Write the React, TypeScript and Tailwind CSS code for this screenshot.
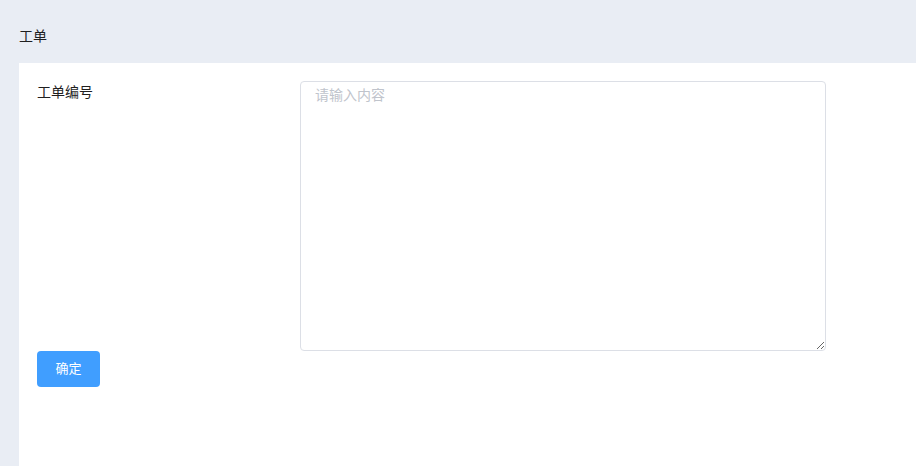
export default function App() {
  return (
    <div
      className="min-h-[466px] bg-[#e9edf4] text-[14px] text-[#1f1f1f]"
      style={{ fontFamily: '"Liberation Sans", "Noto Sans CJK SC", sans-serif' }}
    >
      <div className="h-[63px] pl-[19px] flex items-center">
        <span className="leading-[22px] pt-[8px]">工单</span>
      </div>
      <div className="ml-[19px] bg-white min-h-[403px] px-[18px] pt-[18px]">
        <div className="flex">
          <label className="w-[263px] shrink-0 leading-[22px] text-[#1f1f1f]">工单编号</label>
          <textarea
            placeholder="请输入内容"
            className="w-[526px] h-[270px] border border-[#dcdfe6] rounded-[4px] px-[14px] py-[3px] text-[14px] leading-[21px] placeholder:text-[#c0c4cc] outline-none"
          />
        </div>
        <button className="w-[63px] h-[36px] bg-[#409eff] text-white text-[13px] rounded-[4px]">
          确定
        </button>
      </div>
    </div>
  );
}
